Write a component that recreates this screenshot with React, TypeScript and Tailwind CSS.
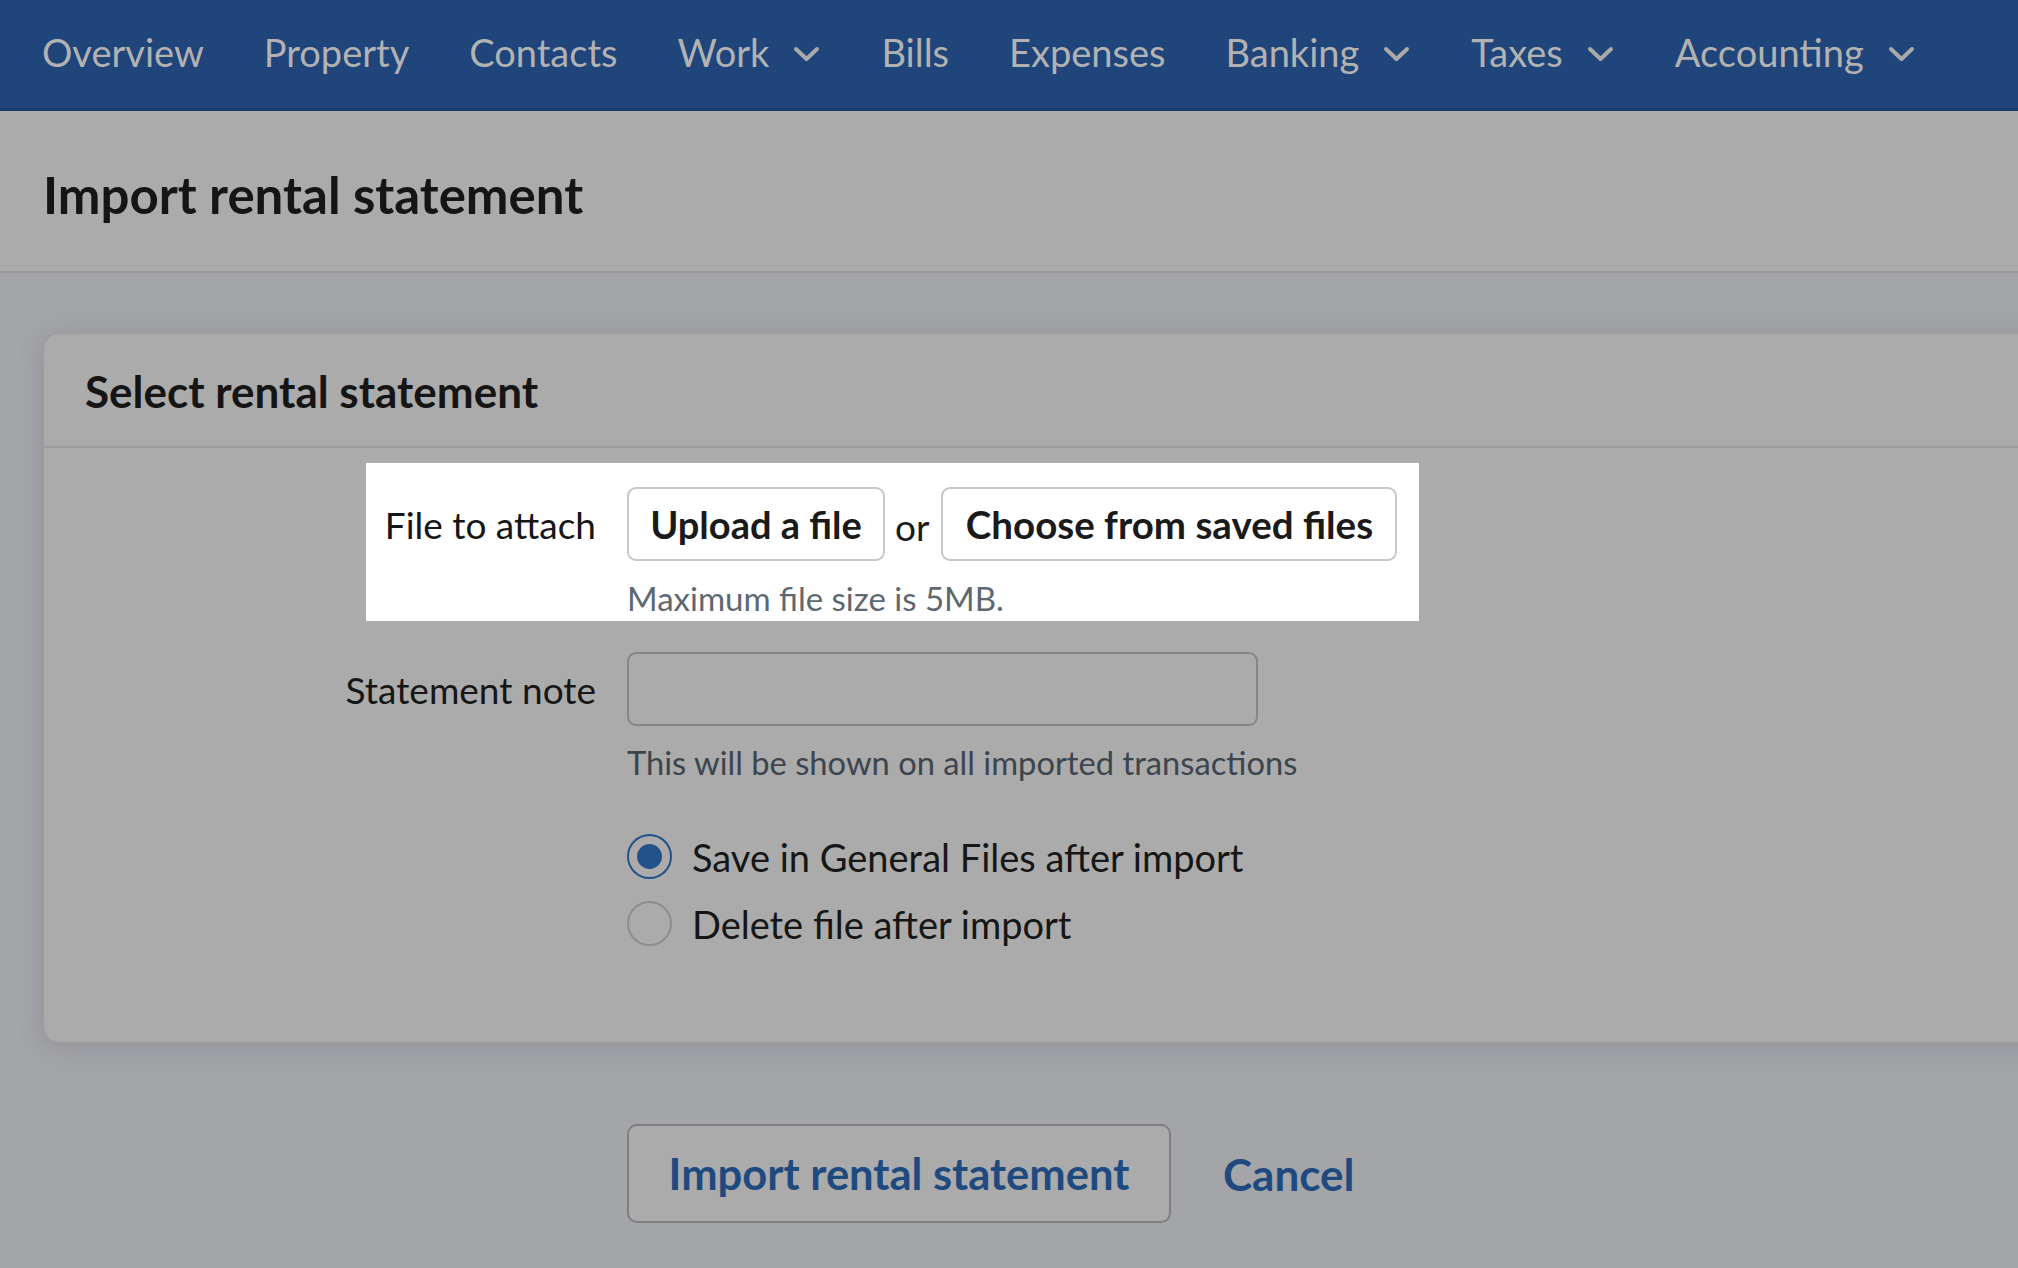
import React from 'react';

const navItems = [
  { label: 'Overview', menu: false },
  { label: 'Property', menu: false },
  { label: 'Contacts', menu: false },
  { label: 'Work', menu: true },
  { label: 'Bills', menu: false },
  { label: 'Expenses', menu: false },
  { label: 'Banking', menu: true },
  { label: 'Taxes', menu: true },
  { label: 'Accounting', menu: true },
];

const Chevron = () => (
  <svg width="28" height="18" viewBox="0 0 28 18" className="ml-[24px] mt-[4px]">
    <polyline points="3,4 13.5,14 24,4" fill="none" stroke="#a9a9a9" strokeWidth="4" strokeLinecap="round" strokeLinejoin="round" />
  </svg>
);

const Radio = ({ checked }: { checked?: boolean }) =>
  checked ? (
    <span className="w-[45px] h-[45px] rounded-full border-[2px] border-[#23528a] flex items-center justify-center shrink-0">
      <span className="w-[25px] h-[25px] rounded-full bg-[#23528a]" />
    </span>
  ) : (
    <span className="w-[45px] h-[45px] rounded-full border-[2px] border-[#8d8d8d] shrink-0" />
  );

const App = () => {
  return (
    <div className="min-h-[1268px] bg-[#a4a5a9] font-['Lato',sans-serif] overflow-hidden">
      <nav className="h-[111px] bg-[#1f457b] border-b-[3px] border-[#183b6b] flex items-center pl-[42px] gap-[60px]">
        {navItems.map((item) => (
          <div key={item.label} className="flex items-center text-[#b2b2b2] text-[38px] leading-none pb-[4px]">
            <span>{item.label}</span>
            {item.menu && <Chevron />}
          </div>
        ))}
      </nav>

      <header className="h-[162px] bg-[#ababab] border-b-[2px] border-[#9a9a9a] flex items-center pl-[43px]">
        <h1 className="text-[51px] font-bold leading-none text-[#151515] mt-[6px]">Import rental statement</h1>
      </header>

      <main className="pt-[60px] pl-[43px]">
        <section className="w-[2100px] bg-[#ababab] border border-[#9b9b9d] rounded-[16px] shadow-[0_4px_24px_rgba(90,95,110,0.25)]">
          <div className="h-[114px] border-b-[2px] border-[#9b9b9d] flex items-center pl-[41px]">
            <h2 className="text-[44px] font-bold leading-none text-[#151515] mt-[2px]">Select rental statement</h2>
          </div>

          <div className="pt-[15px] pb-[96px]">
            <div className="flex">
              <div className="w-[322px]" />
              <div className="bg-white flex pt-[24px] pb-[4px] pr-[22px]">
                <div className="w-[230px] h-[74px] flex items-center justify-end text-[37px] text-[#161616] leading-none">
                  File to attach
                </div>
                <div className="ml-[31px]">
                  <div className="flex items-center">
                    <button className="h-[74px] w-[258px] border-[2px] border-[#c3c7cb] rounded-[9px] text-[38px] font-bold text-[#1a1a1a] leading-none">
                      Upload a file
                    </button>
                    <span className="ml-[10px] mr-[12px] text-[37px] text-[#1a1a1a] leading-none mt-[4px]">or</span>
                    <button className="h-[74px] w-[456px] border-[2px] border-[#c3c7cb] rounded-[9px] text-[38.5px] font-bold text-[#1a1a1a] leading-none">
                      Choose from saved files
                    </button>
                  </div>
                  <p className="mt-[18px] text-[33px] text-[#5d6871] leading-[38px]">Maximum file size is 5MB.</p>
                </div>
              </div>
            </div>

            <div className="flex mt-[31px]">
              <div className="w-[552px] h-[74px] flex items-center justify-end text-[37px] text-[#161616] leading-none">
                Statement note
              </div>
              <div className="ml-[31px]">
                <input className="block w-[631px] h-[74px] border-[2px] border-[#868686] rounded-[9px] bg-transparent" />
                <p className="mt-[18px] text-[32.7px] text-[#3c454e] leading-[38px]">This will be shown on all imported transactions</p>

                <div className="mt-[52px] flex flex-col gap-[22px]">
                  <label className="flex items-center gap-[20px] text-[38px] text-[#161616] leading-none">
                    <Radio checked />
                    <span>Save in General Files after import</span>
                  </label>
                  <label className="flex items-center gap-[20px] text-[38px] text-[#161616] leading-none">
                    <Radio />
                    <span>Delete file after import</span>
                  </label>
                </div>
              </div>
            </div>
          </div>
        </section>

        <div className="mt-[81px] ml-[584px] flex items-center gap-[52px]">
          <button className="h-[99px] w-[544px] border-[2px] border-[#7f7f81] rounded-[10px] bg-[#ababab] text-[43.5px] font-bold text-[#1f4a80] leading-none">
            Import rental statement
          </button>
          <button className="text-[44px] font-bold text-[#1f4a80] leading-none">Cancel</button>
        </div>
      </main>
    </div>
  );
};

export default App;
